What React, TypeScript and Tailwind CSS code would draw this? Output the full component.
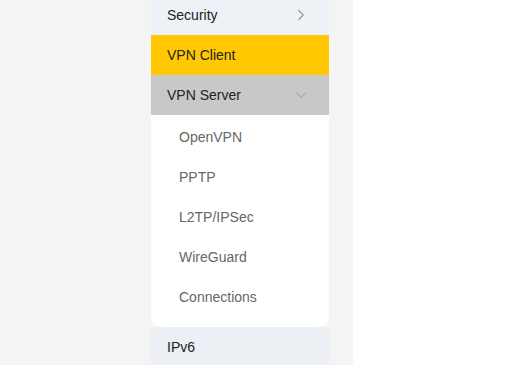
import { ChevronRight, ChevronDown } from "lucide-react";

const subItems = ["OpenVPN", "PPTP", "L2TP/IPSec", "WireGuard", "Connections"];

export default function App() {
  return (
    <div
      className="flex h-[365px] w-[518px] overflow-hidden text-[14px]"
      style={{ fontFamily: '"Liberation Sans", Arial, sans-serif' }}
    >
      {/* Sidebar area */}
      <div className="w-[353px] bg-[#f4f4f4] pl-[151px]">
        <div className="w-[178px] -mt-[5px]">
          <div className="flex h-[40px] items-center justify-between bg-[#eef1f5] pl-4 pr-[19px] text-[#222]">
            <span>Security</span>
            <ChevronRight className="h-[18px] w-[18px] text-[#999]" strokeWidth={1.6} />
          </div>
          <div className="flex h-[40px] items-center bg-[#ffc800] pl-4 text-[#222]">
            <span>VPN Client</span>
          </div>
          <div className="flex h-[40px] items-center justify-between bg-[#c8c8c8] pl-4 pr-[19px] text-[#222]">
            <span>VPN Server</span>
            <ChevronDown className="h-[18px] w-[18px] text-[#b0b0b0]" strokeWidth={1.6} />
          </div>
          <div className="rounded-b-[10px] bg-white pt-[2px] pb-[10px]">
            {subItems.map((item) => (
              <div key={item} className="flex h-[40px] items-center pl-7 text-[#666]">
                {item}
              </div>
            ))}
          </div>
          <div className="flex h-[40px] items-center bg-[#eceff3] pl-4 text-[#222]">
            <span>IPv6</span>
          </div>
        </div>
      </div>
      {/* Content area */}
      <div className="flex-1 bg-white" />
    </div>
  );
}
